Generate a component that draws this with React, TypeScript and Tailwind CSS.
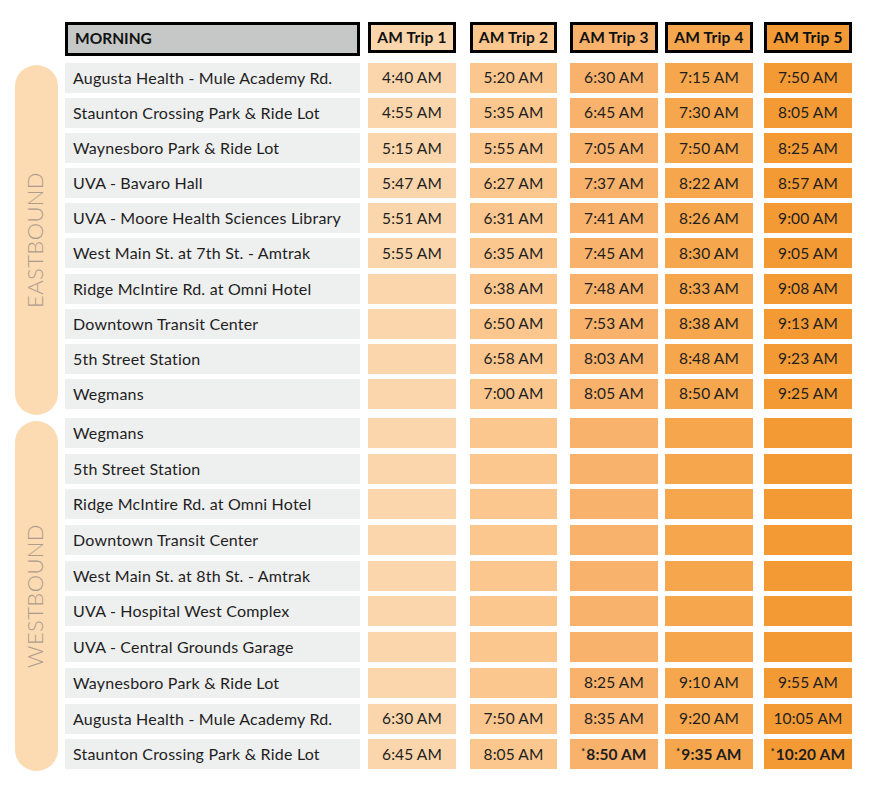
const trips = [
  { name: "AM Trip 1", bg: "bg-[#fbd6ad]", ml: "ml-[8px]", w: "w-[88px]" },
  { name: "AM Trip 2", bg: "bg-[#fbc78f]", ml: "ml-[14px]", w: "w-[87px]" },
  { name: "AM Trip 3", bg: "bg-[#f8b26c]", ml: "ml-[13px]", w: "w-[88px]" },
  { name: "AM Trip 4", bg: "bg-[#f6a64c]", ml: "ml-[7px]", w: "w-[88px]" },
  { name: "AM Trip 5", bg: "bg-[#f39a35]", ml: "ml-[11px]", w: "w-[88px]" },
];

type Row = { stop: string; times: string[] };

const eastbound: Row[] = [
  { stop: "Augusta Health - Mule Academy Rd.", times: ["4:40 AM", "5:20 AM", "6:30 AM", "7:15 AM", "7:50 AM"] },
  { stop: "Staunton Crossing Park & Ride Lot", times: ["4:55 AM", "5:35 AM", "6:45 AM", "7:30 AM", "8:05 AM"] },
  { stop: "Waynesboro Park & Ride Lot", times: ["5:15 AM", "5:55 AM", "7:05 AM", "7:50 AM", "8:25 AM"] },
  { stop: "UVA - Bavaro Hall", times: ["5:47 AM", "6:27 AM", "7:37 AM", "8:22 AM", "8:57 AM"] },
  { stop: "UVA - Moore Health Sciences Library", times: ["5:51 AM", "6:31 AM", "7:41 AM", "8:26 AM", "9:00 AM"] },
  { stop: "West Main St. at 7th St. - Amtrak", times: ["5:55 AM", "6:35 AM", "7:45 AM", "8:30 AM", "9:05 AM"] },
  { stop: "Ridge McIntire Rd. at Omni Hotel", times: ["", "6:38 AM", "7:48 AM", "8:33 AM", "9:08 AM"] },
  { stop: "Downtown Transit Center", times: ["", "6:50 AM", "7:53 AM", "8:38 AM", "9:13 AM"] },
  { stop: "5th Street Station", times: ["", "6:58 AM", "8:03 AM", "8:48 AM", "9:23 AM"] },
  { stop: "Wegmans", times: ["", "7:00 AM", "8:05 AM", "8:50 AM", "9:25 AM"] },
];

const empty = ["", "", "", "", ""];

const westbound: Row[] = [
  { stop: "Wegmans", times: empty },
  { stop: "5th Street Station", times: empty },
  { stop: "Ridge McIntire Rd. at Omni Hotel", times: empty },
  { stop: "Downtown Transit Center", times: empty },
  { stop: "West Main St. at 8th St. - Amtrak", times: empty },
  { stop: "UVA - Hospital West Complex", times: empty },
  { stop: "UVA - Central Grounds Garage", times: empty },
  { stop: "Waynesboro Park & Ride Lot", times: ["", "", "8:25 AM", "9:10 AM", "9:55 AM"] },
  { stop: "Augusta Health - Mule Academy Rd.", times: ["6:30 AM", "7:50 AM", "8:35 AM", "9:20 AM", "10:05 AM"] },
  { stop: "Staunton Crossing Park & Ride Lot", times: ["6:45 AM", "8:05 AM", "*8:50 AM", "*9:35 AM", "*10:20 AM"] },
];

function TimeCell({ value }: { value: string }) {
  if (value.startsWith("*")) {
    return (
      <span className="font-bold">
        <sup className="text-[9px] mr-[1px]">*</sup>
        {value.slice(1)}
      </span>
    );
  }
  return <span>{value}</span>;
}

function Section({ label, rows, gap, pillTop }: { label: string; rows: Row[]; gap: string; pillTop: string }) {
  return (
    <div className="flex items-start">
      <div
        className={`${pillTop} ml-[15px] w-[43px] h-[350px] rounded-full bg-[#fcdab2] flex items-center justify-center`}
      >
        <span className="[writing-mode:vertical-rl] rotate-180 text-[22px] font-light tracking-[0.4px] text-[#ad9d8e] leading-none -ml-[4px]">
          {label}
        </span>
      </div>
      <div className={`ml-[7px] flex flex-col ${gap}`}>
        {rows.map((row, i) => (
          <div key={i} className="flex h-[30px]">
            <div className="w-[295px] bg-[#eeefef] pl-[8px] flex items-center text-[16px] tracking-[0.2px] text-[#1e1e1e]">
              {row.stop}
            </div>
            {trips.map((t, j) => (
              <div
                key={j}
                className={`${t.ml} ${t.w} ${t.bg} flex items-center justify-center text-[15.5px] tracking-[0.1px] text-[#1e1e1e]`}
              >
                <TimeCell value={row.times[j]} />
              </div>
            ))}
          </div>
        ))}
      </div>
    </div>
  );
}

export default function App() {
  return (
    <div className="w-[870px] h-[786px] bg-white pt-[22px] font-['Lato','Noto_Sans',sans-serif]">
      <div className="flex items-start ml-[65px]">
        <div className="w-[295px] h-[34px] bg-[#c6c8c8] border-[3px] border-black pl-[7px] flex items-center text-[15.5px] font-bold text-[#111]">
          MORNING
        </div>
        {trips.map((t) => (
          <div
            key={t.name}
            className={`${t.ml} ${t.w} h-[31px] ${t.bg} border-[3px] border-black flex items-center justify-center text-[15.5px] tracking-[0.2px] font-bold text-[#111]`}
          >
            {t.name}
          </div>
        ))}
      </div>
      <div className="mt-[7px]">
        <Section label="EASTBOUND" rows={eastbound} gap="gap-[5.1px]" pillTop="mt-[2px]" />
      </div>
      <div className="mt-[3px]">
        <Section label="WESTBOUND" rows={westbound} gap="gap-[5.7px]" pillTop="mt-[3px]" />
      </div>
    </div>
  );
}
